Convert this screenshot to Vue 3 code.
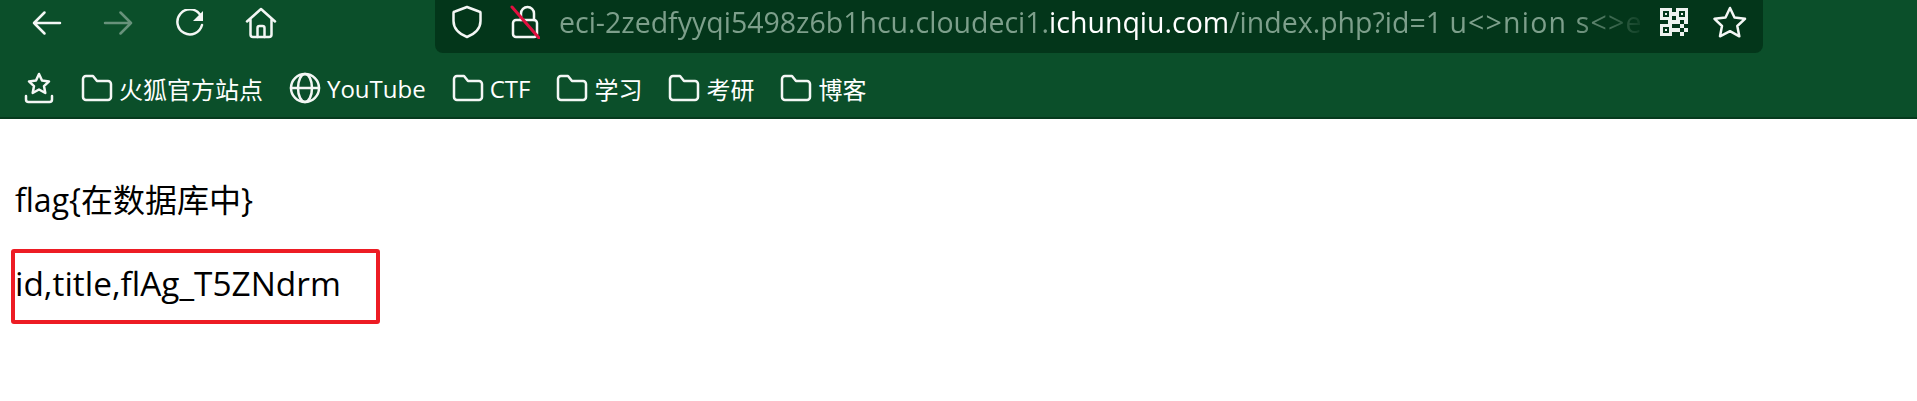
<template>
  <div class="browser">
    <header class="chrome">
      <div class="toolbar">
        <nav class="nav-buttons">
          <button class="nav-btn">
            <svg viewBox="0 0 30 26" width="30" height="26"><path d="M28 13H2M12.5 2.5 2 13l10.500 10.500" /></svg>
          </button>
          <button class="nav-btn disabled">
            <svg viewBox="0 0 30 26" width="30" height="26"><path d="M2 13h26M17.500 2.500 28 13 17.500 23.500" /></svg>
          </button>
          <button class="nav-btn">
            <svg viewBox="0 0 30 28" width="30" height="28">
              <path d="M25 5.500A12.500 12.500 0 1 0 27 16" />
              <path class="solid" d="M28 2v10H18z" />
            </svg>
          </button>
          <button class="nav-btn">
            <svg viewBox="0 0 32 32" width="32" height="32">
              <path d="M2 14.500 16 2l14 12.500M5.500 12v15.500a2.500 2.500 0 0 0 2.500 2.500h16a2.500 2.500 0 0 0 2.500-2.500V12" />
              <path d="M12.500 30v-9a2 2 0 0 1 2-2h3a2 2 0 0 1 2 2v9" />
            </svg>
          </button>
        </nav>

        <div class="url-bar">
          <svg class="shield" viewBox="0 0 32 34" width="32" height="34">
            <path d="M16 2 4 6.500c-1 0-1.500.7-1.500 1.500v8c0 7 5 12.500 13.500 16 8.500-3.500 13.500-9 13.500-16V8c0-.8-.5-1.500-1.500-1.500z" />
          </svg>
          <svg class="lock" viewBox="0 0 30 34" width="30" height="34">
            <path d="M11 15V8.500a6.500 6.500 0 0 1 13 0v6.500" />
            <rect x="3" y="15" width="24" height="17" rx="3" />
            <path class="slash" d="M2 2 29 33" />
          </svg>
          <div class="url-text">
            <span>eci-2zedfyyqi5498z6b1hcu.cloudeci1.</span><span class="host">ichunqiu.com</span><span>/index.php?id=1 </span><span class="tail">u&lt;&gt;nion s&lt;&gt;e</span>
          </div>
          <svg class="qr" viewBox="0 0 28 28" width="28" height="28">
            <path fill-rule="evenodd" d="M0 0h12v12H0zM3 3v6h6V3zM16 0h12v12H16zM19 3v6h6V3zM0 16h12v12H0zM3 19v6h6v-6z" />
            <path d="M5 5h2v2H5zM21 5h2v2h-2zM5 21h2v2H5zM12 4h4v4h-4zM12 12h4v4h-4zM16 12h4v4h-4zM24 12h4v4h-4zM8 12h4v4H8zM12 20h4v4h-4zM20 16h4v4h-4zM16 20h4v4h-4zM24 20h4v4h-4zM20 24h4v4h-4z" />
          </svg>
          <svg class="star" viewBox="0 0 34 32" width="34" height="32">
            <path d="M17 2l4.500 9.500 10.500 1.300-7.700 7.200 2 10.300L17 25.200 7 30.300l2-10.300-7.500-7.200L12.500 11.500z" />
          </svg>
        </div>
      </div>

      <div class="bookmarks">
        <svg class="saved" viewBox="0 0 30 32" width="30" height="32">
          <path d="M15 2l3 6.500 7 .9-5 4.700 1.300 6.900-6.300-3.500L8.700 21 10 14.100 5 9.400l7-.9z" />
          <path d="M2 24v3.500A2.500 2.500 0 0 0 4.500 30h21a2.500 2.500 0 0 0 2.500-2.500V24" />
        </svg>
        <a v-for="item in bookmarks" :key="item.label" class="bookmark">
          <svg v-if="item.globe" viewBox="0 0 32 32" width="32" height="32">
            <circle cx="16" cy="16" r="14" />
            <ellipse cx="16" cy="16" rx="7" ry="14" />
            <path d="M2 16h28" />
          </svg>
          <svg v-else viewBox="0 0 32 28" width="32" height="28">
            <path d="M2 5a3 3 0 0 1 3-3h7l4 5h11a3 3 0 0 1 3 3v13a3 3 0 0 1-3 3H5a3 3 0 0 1-3-3z" />
          </svg>
          <span>{{ item.label }}</span>
        </a>
      </div>
    </header>

    <main class="page">
      <p>flag{在数据库中}</p>
      <p class="marked">id,title,flAg_T5ZNdrm</p>
    </main>
  </div>
</template>

<script setup>
const bookmarks = [
  { label: '火狐官方站点' },
  { label: 'YouTube', globe: true },
  { label: 'CTF' },
  { label: '学习' },
  { label: '考研' },
  { label: '博客' }
]
</script>

<style>
html, body {
  margin: 0;
  background: #fff;
  overflow: hidden;
}
</style>

<style scoped>
.browser {
  width: 1917px;
  height: 401px;
  font-family: "Open Sans", "Noto Sans CJK SC", sans-serif;
}

.chrome {
  background: #0b4f2a;
  border-bottom: 2px solid #063a1d;
  height: 117px;
}

svg {
  flex: none;
  fill: none;
  stroke: #f4f7f5;
  stroke-width: 2.500;
  stroke-linecap: round;
  stroke-linejoin: round;
}

.toolbar {
  display: flex;
  height: 53px;
}

.nav-buttons {
  display: flex;
  padding-left: 11px;
  width: 435px;
  box-sizing: border-box;
}

.nav-btn {
  width: 71.500px;
  height: 46px;
  padding: 0;
  border: 0;
  background: none;
  display: flex;
  align-items: center;
  justify-content: center;
}

.nav-btn.disabled svg {
  opacity: 0.4;
}

.solid {
  fill: #f4f7f5;
  stroke: none;
}

.url-bar {
  width: 1328px;
  display: flex;
  align-items: center;
  background: #03361a;
  border-radius: 0 0 8px 8px;
  padding: 0 16px 10px 16px;
  box-sizing: border-box;
}

.shield {
  margin-right: 27px;
}

.lock {
  margin-right: 19px;
}

.slash {
  stroke: #e0103f;
  stroke-width: 3;
}

.url-text {
  width: 1091px;
  font-size: 28.500px;
  white-space: nowrap;
  overflow: hidden;
  color: #7d9f8b;
  -webkit-mask-image: linear-gradient(to right, #000 93%, transparent 100%);
  mask-image: linear-gradient(to right, #000 93%, transparent 100%);
}

.host {
  color: #fff;
}

.tail {
  letter-spacing: 1.200px;
}

.qr {
  margin-left: 11px;
  stroke: none;
  fill: #eef2ef;
}

.star {
  margin-left: 25px;
}

.bookmarks {
  display: flex;
  align-items: center;
  height: 64px;
  padding: 6px 0 0 24px;
  box-sizing: border-box;
  color: #fff;
  font-size: 24px;
}

.saved {
  margin-right: 27px;
}

.bookmark {
  display: flex;
  align-items: center;
  gap: 6px;
  margin-right: 26px;
}

.page {
  padding: 61px 15px 0;
  color: #000;
  font-size: 32px;
}

.page p {
  margin: 0;
  height: 84px;
  line-height: 40px;
}

.page .marked {
  position: relative;
  font-size: 33.400px;
  line-height: 38px;
}

.marked::after {
  content: "";
  position: absolute;
  left: -4px;
  top: -15px;
  width: 361px;
  height: 67px;
  border: 4px solid #ed1c24;
  border-radius: 3px;
}
</style>
